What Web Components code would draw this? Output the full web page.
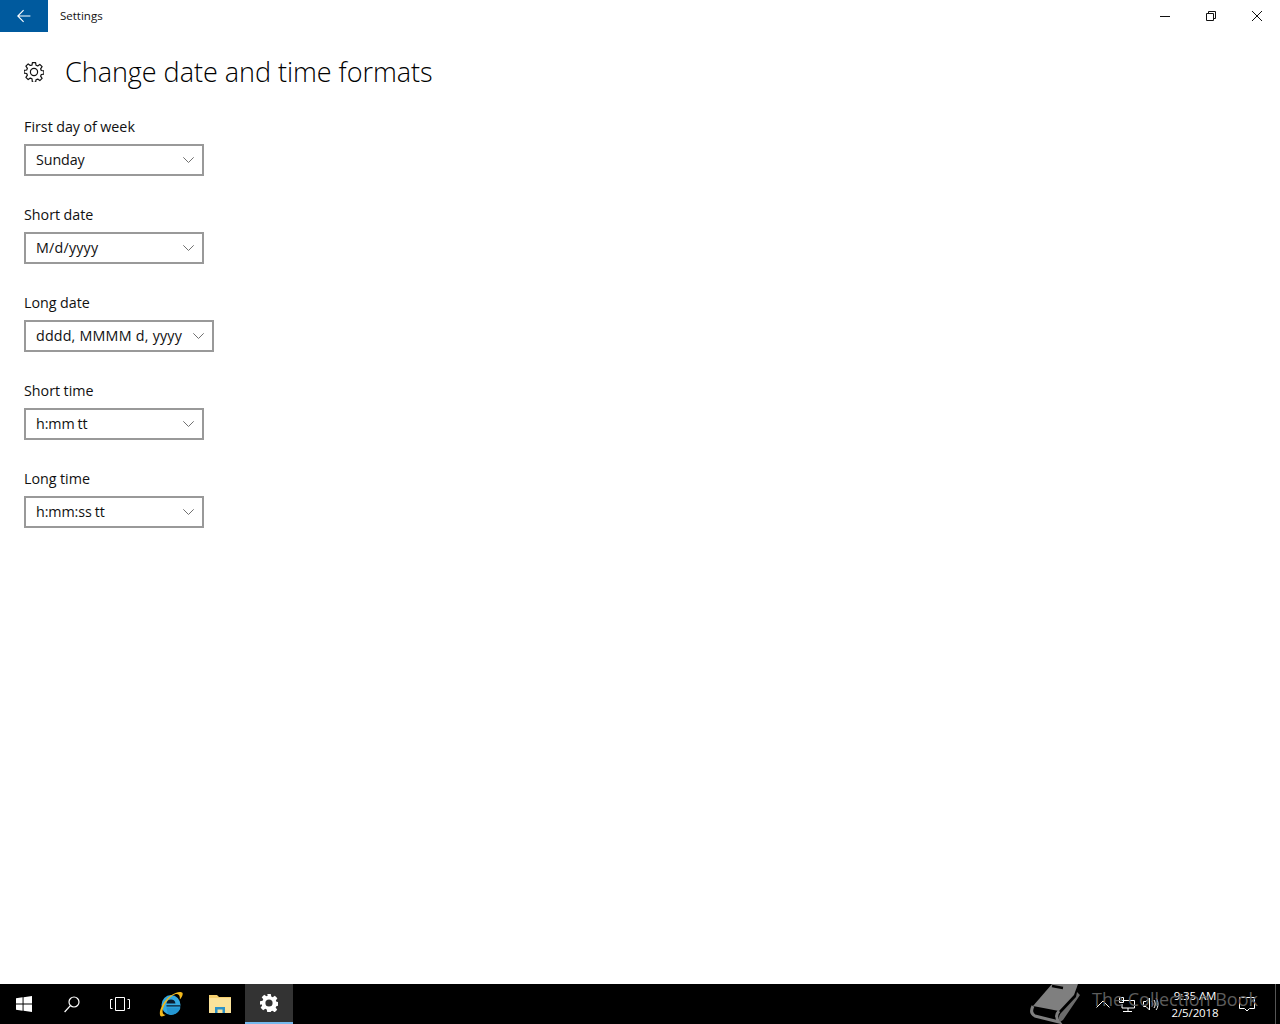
<!DOCTYPE html>
<html lang="en">
<head>
<meta charset="utf-8">
<title>Settings</title>
<style>
  html, body { margin: 0; height: 100%; background: #fff; }
  body { font-family: "Open Sans", "Noto Sans", sans-serif; }
  win-desktop { height: 1024px; }
</style>
</head>
<body>
<template id="titlebar-tpl">
  <style>
    :host { display: flex; align-items: center; height: 32px; background: #fff; color: #000; flex: none; }
    .back { width: 48px; height: 32px; background: #005a9e; display: flex; align-items: center; justify-content: center; }
    .title { margin-left: 12px; padding-bottom: 2px; font-size: 11.5px; flex: 1; color: #111; }
    .caps { display: flex; }
    .cap { width: 46px; height: 32px; display: flex; align-items: center; justify-content: center; }
  </style>
  <div class="back">
    <svg width="14" height="14" viewBox="0 0 14 14" fill="none" stroke="#fff" stroke-width="1.1"><path d="M0.8 7H13.4M6.6 1.2L0.8 7L6.6 12.8"/></svg>
  </div>
  <span class="title"><slot></slot></span>
  <div class="caps">
    <div class="cap"><svg width="10" height="10" viewBox="0 0 10 10" fill="none" stroke="#111"><path d="M0 5.5H10"/></svg></div>
    <div class="cap"><svg width="10" height="10" viewBox="0 0 10 10" fill="none" stroke="#111"><path d="M0.5 2.5H7.5V9.5H0.5ZM2.5 2.5V0.5H9.5V7.5H7.5"/></svg></div>
    <div class="cap"><svg width="10" height="10" viewBox="0 0 10 10" fill="none" stroke="#111"><path d="M0 0L10 10M10 0L0 10"/></svg></div>
  </div>
</template>

<template id="combo-tpl">
  <style>
    :host { display: block; margin-bottom: 29px; }
    .label { display: block; font-size: 14.3px; line-height: 20px; height: 20px; margin-bottom: 7px; color: #111; word-spacing: -.3px; }
    .box { box-sizing: border-box; display: inline-flex; align-items: center; height: 32px; min-width: 180px; padding: 0 8px 0 10px; border: 2px solid #999; background: #fff; font-size: 14.3px; color: #111; }
    .value { flex: 1; white-space: nowrap; padding-bottom: 1px; letter-spacing: var(--value-ls, -.1px); word-spacing: var(--value-ws, -.6px); }
    svg { margin-left: 11px; flex: none; }
  </style>
  <span class="label"></span>
  <div class="box">
    <span class="value"><slot></slot></span>
    <svg width="11" height="6" viewBox="0 0 11 6" fill="none" stroke="#707070"><path d="M0.3 0.3L5.5 5.5L10.7 0.3"/></svg>
  </div>
</template>

<template id="page-tpl">
  <style>
    :host { display: block; flex: 1; padding: 20px 24px 0; background: #fff; }
    header { display: flex; align-items: center; height: 40px; margin-bottom: 25px; }
    svg { flex: none; margin-right: 21px; }
    h1 { margin: 0; font-size: 27px; font-weight: 300; line-height: 40px; color: #000; white-space: nowrap; letter-spacing: -.03px; }
  </style>
  <header>
    <svg width="20" height="20" viewBox="0 0 20 20" fill="none" stroke="#111" stroke-width="1.2" stroke-linejoin="round">
      <path d="M8.4 .6h3.2l.4 2.6 1.7.7 2.1-1.5 2.3 2.3-1.5 2.1.7 1.7 2.6.4v3.2l-2.6.4-.7 1.7 1.5 2.1-2.3 2.3-2.1-1.5-1.7.7-.4 2.6H8.4L8 16.8l-1.7-.7-2.1 1.5-2.3-2.3 1.5-2.1-.7-1.7-2.6-.4V8.4l2.6-.4.7-1.7-1.5-2.1 2.3-2.3 2.1 1.5L8 3.2z"/>
      <circle cx="10" cy="10" r="3.6"/>
    </svg>
    <h1><slot></slot></h1>
  </header>
  <div><slot name="fields"></slot></div>
</template>

<template id="taskbar-tpl">
  <style>
    :host { display: flex; align-items: stretch; position: relative; height: 40px; flex: none; background: #000; color: #fff; overflow: hidden; }
    .btn { width: 48px; display: flex; align-items: center; justify-content: center; flex: none; box-sizing: border-box; }
    .gap { width: 3px; flex: none; }
    .gap2 { width: 2px; flex: none; }
    .active { background: #333; border-bottom: 2px solid #76b9ed; }
    .spacer { flex: 1; }
    .tray { display: flex; align-items: center; }
    .tray-icon { display: flex; align-items: center; justify-content: center; width: 24px; flex: none; }
    .clock { width: 62px; margin-left: 1px; margin-right: 9px; text-align: center; font-size: 11.5px; line-height: 17px; white-space: nowrap; letter-spacing: -0.1px; }
    .end { width: 4px; flex: none; border-left: 1px solid #555; margin-left: 16px; height: 40px; }
    /* marca de agua encima de la barra */
    .mark { position: absolute; left: 1030px; top: 0; height: 40px; display: flex; align-items: center; color: #5c5c5c; font-size: 18px; white-space: nowrap; pointer-events: none; }
    .mark svg { margin-right: 12px; }
    .mark span { position: relative; top: -5px; }
  </style>
  <div class="mark">
    <svg width="50" height="40" viewBox="0 0 50 40" fill="none">
      <path d="M3 22L22 0H48L44 11L29 27Z" fill="#7f7f7f"/>
      <path d="M22 2L33 4" stroke="#000" stroke-width="2.5"/>
      <path d="M3 22C1 26 1 30 5 32L29 38C26 34 26 30 29 27" stroke="#7f7f7f" stroke-width="3"/>
      <path d="M47 8L50 11L33 36L30 38C28 35 29 31 31 29L46 13Z" fill="#6b6b6b"/>
    </svg>
    <span>The Collection Book</span>
  </div>
  <div class="btn">
    <svg width="16" height="16" viewBox="0 0 17 17" fill="#fff"><path d="M0 2.4L7 1.4V8H0ZM8 1.2L17 0V8H8ZM0 9H7V15.6L0 14.6ZM8 9H17V17L8 15.8Z"/></svg>
  </div>
  <div class="btn">
    <svg width="16" height="17" viewBox="0 0 16 17" fill="none" stroke="#fff" stroke-width="1.2"><circle cx="10" cy="6" r="5"/><path d="M6.4 9.6L.6 16"/></svg>
  </div>
  <div class="btn">
    <svg width="20" height="14" viewBox="0 0 20 14" fill="none" stroke="#fff"><path d="M5.5 .5H14.5V13.5H5.5ZM2.5 2.5H.5V11.5H2.5M17.5 2.5H19.5V11.5H17.5"/></svg>
  </div>
  <div class="gap"></div>
  <div class="btn">
    <svg width="24" height="26" viewBox="0 0 24 26">
      <ellipse cx="12" cy="14" rx="9.5" ry="10" fill="#34a9e0"/>
      <path d="M7.5 12.4C8 9.6 9.8 8.6 12 8.6S16 9.6 16.5 12.4Z" fill="#0a1c2e"/>
      <path d="M7.5 16.5H21.5C20.4 20.6 17 23.6 12.6 23.6C10.6 23.6 9.6 23.2 8.6 22.4Z" fill="#2496d2"/>
      <path d="M7.6 15.6H21.4V14.2H7.4Z" fill="#0a1c2e"/>
      <path d="M1.4 25C-.8 21 3.4 11 11.4 4.8C16.6 .8 22 0 23.4 1.8C24.4 3.4 22.8 6.4 20.8 8.4C21 6 20.6 3.8 18.6 3.2C13.6 1.8 3.4 13.8 3.6 21C3.7 23 5 23.8 6.8 23.8C4.6 25.4 2.4 26 1.4 25Z" fill="#f3b91d"/>
    </svg>
  </div>
  <div class="btn">
    <svg style="margin-left:1px" width="22" height="18" viewBox="0 0 22 18">
      <path d="M0 0H8L10 2H22V18H0Z" fill="#f5cf6e"/>
      <path d="M0 3H22V18H0Z" fill="#fbe29a"/>
      <path d="M6 12H16V18H13.5V14.5H8.5V18H6Z" fill="#2d92c8"/>
    </svg>
  </div>
  <div class="gap2"></div>
  <div class="btn active">
    <svg width="18" height="18" viewBox="0 0 20 20" fill="#fff" fill-rule="evenodd">
      <path d="M8 0h4l.5 2.9 1.6.7 2.4-1.7 2.8 2.8-1.7 2.4.7 1.6 2.7.3v4l-2.9.5-.7 1.6 1.7 2.4-2.8 2.8-2.4-1.7-1.6.7L12 20H8l-.5-2.9-1.6-.7-2.4 1.7-2.8-2.8 1.7-2.4-.7-1.6L0 12V8l2.9-.5.7-1.6L1.9 3.5 4.7.7l2.4 1.7 1.6-.7zM10 6a4 4 0 1 0 0 8 4 4 0 0 0 0-8z"/>
    </svg>
  </div>
  <div class="spacer"></div>
  <div class="tray">
    <div class="tray-icon"><svg width="14" height="8" viewBox="0 0 14 8" fill="none" stroke="#fff"><path d="M.5 7.5L7 1L13.5 7.5"/></svg></div>
    <div class="tray-icon"><svg width="16" height="15" viewBox="0 0 16 15" fill="none" stroke="#fff"><path d="M3 3.5H15.5V11H3V7M9 11V14M4 14.5H13M.5 .5H4.5V5.5H.5Z"/></svg></div>
    <div class="tray-icon"><svg width="16" height="14" viewBox="0 0 16 14" fill="none" stroke="#fff"><path d="M.5 4.5H3L6.5 1V13L3 9.5H.5ZM9 4.5C10 6 10 8 9 9.5M11 3C12.6 5 12.6 9 11 11M13 1C15.6 4 15.6 10 13 13"/></svg></div>
    <div class="clock"><div>9:35 AM</div><div>2/5/2018</div></div>
    <div class="tray-icon"><svg width="16" height="15" viewBox="0 0 16 15" fill="none" stroke="#fff"><path d="M.5 .5H15.5V11.5H10.5L8 14L5.5 11.5H.5Z"/></svg></div>
    <div class="end"></div>
  </div>
</template>

<win-desktop>
  <win-titlebar>Settings</win-titlebar>
  <settings-page>
    Change date and time formats
    <win-combo slot="fields" label="First day of week">Sunday</win-combo>
    <win-combo slot="fields" label="Short date" style="--value-ls: .2px">M/d/yyyy</win-combo>
    <win-combo slot="fields" label="Long date" style="--value-ls: .15px; --value-ws: .3px">dddd, MMMM d, yyyy</win-combo>
    <win-combo slot="fields" label="Short time">h:mm tt</win-combo>
    <win-combo slot="fields" label="Long time">h:mm:ss tt</win-combo>
  </settings-page>
  <win-taskbar></win-taskbar>
</win-desktop>

<script>
// Clase base: clona el template en un shadow root abierto
class TemplateElement extends HTMLElement {
  constructor(tplId) {
    super();
    this.attachShadow({ mode: 'open' });
    this.shadowRoot.appendChild(document.getElementById(tplId).content.cloneNode(true));
  }
}

class WinDesktop extends HTMLElement {
  constructor() {
    super();
    this.attachShadow({ mode: 'open' });
    this.shadowRoot.innerHTML = `
      <style>:host { display: flex; flex-direction: column; width: 1280px; }</style>
      <slot></slot>`;
  }
}

class WinTitlebar extends TemplateElement { constructor() { super('titlebar-tpl'); } }
class SettingsPage extends TemplateElement { constructor() { super('page-tpl'); } }
class WinTaskbar extends TemplateElement { constructor() { super('taskbar-tpl'); } }

class WinCombo extends TemplateElement {
  constructor() { super('combo-tpl'); }
  connectedCallback() {
    this.shadowRoot.querySelector('.label').textContent = this.getAttribute('label');
  }
}

customElements.define('win-desktop', WinDesktop);
customElements.define('win-titlebar', WinTitlebar);
customElements.define('settings-page', SettingsPage);
customElements.define('win-combo', WinCombo);
customElements.define('win-taskbar', WinTaskbar);
</script>
</body>
</html>
